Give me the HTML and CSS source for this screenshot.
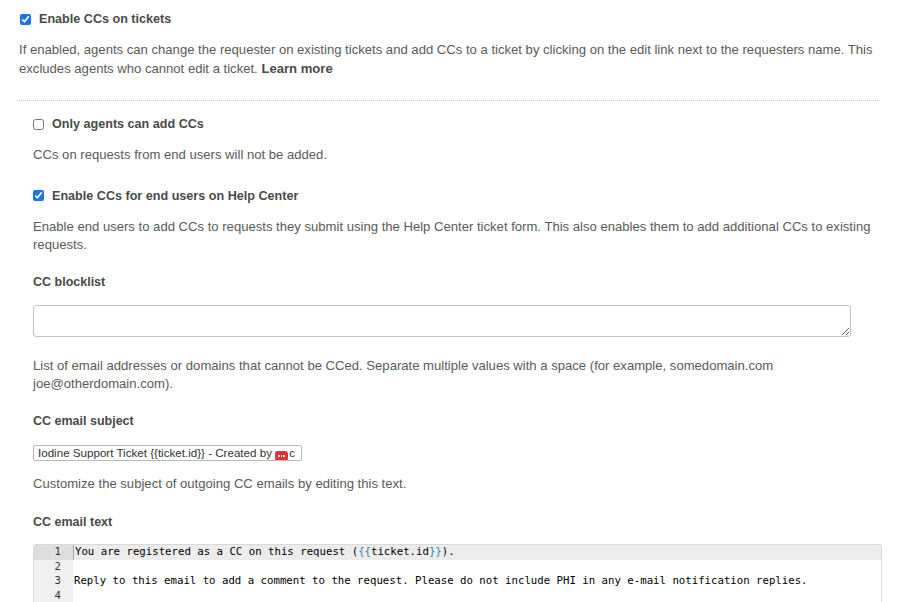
FILE: index.html
```html
<!DOCTYPE html>
<html>
<head>
<meta charset="utf-8">
<link rel="stylesheet" href="styles.css">
</head>
<body>
<div class="page">
  <label class="cb-row top-row">
    <input type="checkbox" class="cb" checked>
    <span class="cb-label">Enable CCs on tickets</span>
  </label>
  <p class="desc first-desc">If enabled, agents can change the requester on existing tickets and add CCs to a ticket by clicking on the edit link next to the requesters name. This excludes agents who cannot edit a ticket. <strong>Learn more</strong></p>
  <div class="divider"></div>
  <div class="nested">
    <label class="cb-row">
      <input type="checkbox" class="cb">
      <span class="cb-label">Only agents can add CCs</span>
    </label>
    <p class="desc after-row">CCs on requests from end users will not be added.</p>
    <label class="cb-row row-gap">
      <input type="checkbox" class="cb" checked>
      <span class="cb-label">Enable CCs for end users on Help Center</span>
    </label>
    <p class="desc after-row">Enable end users to add CCs to requests they submit using the Help Center ticket form. This also enables them to add additional CCs to existing requests.</p>

    <h4 class="field-title">CC blocklist</h4>
    <textarea class="blocklist"></textarea>
    <p class="desc after-field">List of email addresses or domains that cannot be CCed. Separate multiple values with a space (for example, somedomain.com joe@otherdomain.com).</p>

    <h4 class="field-title">CC email subject</h4>
    <div class="subject">Iodine Support Ticket {{ticket.id}} - Created by <span class="badge"><i></i><i></i><i></i></span>c</div>
    <p class="desc after-input">Customize the subject of outgoing CC emails by editing this text.</p>

    <h4 class="field-title">CC email text</h4>
    <div class="editor">
      <div class="line active"><span class="gutter">1</span><span class="code cursor">You are registered as a CC on this request (<span class="tpl">{{</span>ticket.id<span class="tpl">}}</span>).</span></div>
      <div class="line"><span class="gutter">2</span><span class="code"></span></div>
      <div class="line"><span class="gutter">3</span><span class="code">Reply to this email to add a comment to the request. Please do not include PHI in any e-mail notification replies.</span></div>
      <div class="line"><span class="gutter">4</span><span class="code"></span></div>
    </div>
  </div>
</div>
</body>
</html>
```
FILE: styles.css
```css
html, body {
  margin: 0;
  padding: 0;
  background: #fff;
}
body {
  font-family: "Liberation Sans", Arial, sans-serif;
  font-size: 13.1px;
  color: #555;
}
.page {
  padding: 10px 44px 0 19px;
}
.cb-row {
  display: flex;
  align-items: center;
  height: 18px;
  line-height: 18px;
}
.cb {
  width: 11px;
  height: 11px;
  margin: 0 8px 0 0;
  accent-color: #1a73e8;
}
.top-row .cb {
  margin-left: 1px;
}
.cb-label {
  font-weight: bold;
  font-size: 12.6px;
  color: #4a4a4a;
}
.desc {
  margin: 0;
  line-height: 18.5px;
  color: #5a5a5a;
}
.desc strong {
  color: #4a4a4a;
}
.first-desc {
  margin-top: 13px;
}
.divider {
  margin-top: 22px;
  border-top: 1px dotted #c8c8c8;
}
.nested {
  padding-left: 14px;
  padding-top: 14px;
}
.after-row {
  margin-top: 13px;
}
.row-gap {
  margin-top: 22px;
}
.field-title {
  margin: 18px 0 0;
  font-size: 12.5px;
  line-height: 18px;
  font-weight: bold;
  color: #4a4a4a;
}
.blocklist {
  display: block;
  box-sizing: border-box;
  margin-top: 14px;
  width: 818px;
  height: 32px;
  border: 1px solid #c4c4c4;
  border-radius: 3px;
  resize: vertical;
  font-family: inherit;
}
.after-field {
  margin-top: 20px;
}
.subject {
  box-sizing: border-box;
  margin-top: 15px;
  width: 269px;
  height: 16px;
  border: 1px solid #b9b9b9;
  border-radius: 2px;
  padding: 0 4px;
  font-size: 11.6px;
  line-height: 14px;
  color: #333;
  white-space: nowrap;
  overflow: hidden;
}
.badge {
  display: inline-flex;
  align-items: center;
  justify-content: center;
  gap: 1px;
  width: 13px;
  height: 10px;
  vertical-align: -0.5px;
  background: #d8343a;
  border-radius: 3px;
  margin-right: 1px;
}
.badge i {
  width: 1.6px;
  height: 1.6px;
  background: #fff;
  border-radius: 50%;
}
.after-input {
  margin-top: 14px;
  padding-bottom: 2px;
}
.editor {
  margin-top: 13px;
  width: 847px;
  border: 1px solid #d9d9d9;
  border-bottom: none;
  border-radius: 3px 3px 0 0;
  font-family: "DejaVu Sans Mono", monospace;
  font-size: 10.7px;
  color: #000;
  overflow: hidden;
}
.line {
  display: flex;
  height: 14.6px;
  line-height: 14.6px;
}
.gutter {
  box-sizing: border-box;
  width: 39px;
  flex: none;
  background: #f0f0f0;
  color: #333;
  text-align: right;
  padding-right: 12px;
}
.code {
  flex: 1;
  padding-left: 1px;
  white-space: pre;
}
.line.active {
  background: #ececec;
}
.line.active .gutter {
  background: #dedede;
}
.cursor {
  border-left: 1px solid #aaa;
}
.tpl {
  color: #2f8aa8;
}
```
